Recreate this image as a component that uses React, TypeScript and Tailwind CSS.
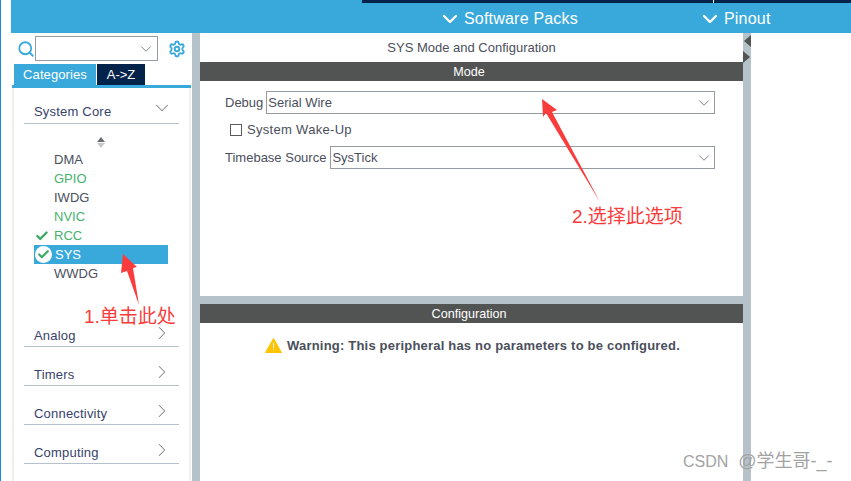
import React from 'react';
import { ChevronDown, ChevronRight, Search, Settings, Check } from 'lucide-react';

const font = "font-['Liberation_Sans',Arial,sans-serif]";

const peripherals = [
  { name: 'DMA', color: 'text-[#4b4f5c]' },
  { name: 'GPIO', color: 'text-[#45b36b]' },
  { name: 'IWDG', color: 'text-[#4b4f5c]' },
  { name: 'NVIC', color: 'text-[#45b36b]' },
];

const Category: React.FC<{ name: string }> = ({ name }) => (
  <div className="h-[39px] pt-[18px] flex-none">
    <div className="h-[21px] mx-[10px] border-b border-[#b5c2c9] flex justify-between pl-[10px] pr-[8px]">
      <span className="text-[13px] leading-[19px] tracking-[0.2px] text-[#37426b]">{name}</span>
      <ChevronRight className="w-[22px] h-[22px] -mr-[2px] -mt-[4px] text-[#7c8288]" strokeWidth={1.1} />
    </div>
  </div>
);

const Sidebar: React.FC = () => (
  <aside className="w-[181px] flex-none flex flex-col bg-white">
    <div className="h-[31px] flex items-center pl-[6px]">
      <Search className="w-[18px] h-[18px] text-[#39a9dc] flex-none" strokeWidth={2.4} />
      <div className="w-[123px] h-[25px] border border-[#979ca0] flex items-center justify-end pr-[2px]">
        <ChevronDown className="w-[18px] h-[18px] text-[#7c8288]" strokeWidth={1.3} />
      </div>
      <Settings className="ml-[10px] w-[18px] h-[18px] text-[#39a9dc]" strokeWidth={2.5} />
    </div>
    <div className="flex pl-[3px] h-[21px] text-[13px] text-white">
      <div className="w-[82px] bg-[#39a9dc] flex items-center justify-center tracking-[0.1px]">Categories</div>
      <div className="w-[48px] ml-[1px] bg-[#03234b] flex items-center justify-center">A-&gt;Z</div>
    </div>
    <div className="h-[3px] ml-[1px] mr-[1px] bg-[#39a9dc]" />
    <div className="flex-1 ml-[1px] mr-[1px] border-x-2 border-[#f0f0f0] flex flex-col">
      <div className="h-[36px] mx-[10px] border-b border-[#b5c2c9] flex items-end justify-between pl-[10px] pb-[1px]">
        <span className="text-[13px] leading-[20px] tracking-[0.2px] text-[#37426b]">System Core</span>
        <ChevronDown className="w-[22px] h-[22px] mb-[3px] mr-[6px] text-[#7c8288]" strokeWidth={1.1} />
      </div>
      <div className="h-[24px] flex items-end justify-center pr-[2px]">
        <div className="flex flex-col gap-[1px] items-center">
          <div className="w-0 h-0 border-x-[4px] border-x-transparent border-b-[5px] border-b-[#6a6e72]" />
          <div className="w-0 h-0 border-x-[4px] border-x-transparent border-t-[5px] border-t-[#c8cbcd]" />
        </div>
      </div>
      <div className="flex flex-col pt-[2px] text-[13px] leading-[19px]">
        {peripherals.map(p => (
          <div key={p.name} className={`h-[19px] pl-[40px] ${p.color}`}>{p.name}</div>
        ))}
        <div className="h-[19px] pl-[21px] flex items-center text-[#45b36b]">
          <Check className="w-[14px] h-[14px] mr-[5px] text-[#3fa866]" strokeWidth={4} />
          RCC
        </div>
        <div className="h-[19px] ml-[20px] w-[134px] bg-[#39a9dc] flex items-center text-white">
          <div className="w-[17px] h-[17px] ml-[1px] mr-[3px] rounded-full bg-white flex items-center justify-center">
            <Check className="w-[13px] h-[13px] text-[#3fa866]" strokeWidth={4} />
          </div>
          SYS
        </div>
        <div className="h-[19px] pl-[40px] text-[#4b4f5c]">WWDG</div>
      </div>
      <div className="h-[25px] flex-none" />
      <Category name="Analog" />
      <Category name="Timers" />
      <Category name="Connectivity" />
      <Category name="Computing" />
    </div>
  </aside>
);

const SelectBox: React.FC<{ value: string; className: string }> = ({ value, className }) => (
  <div className={`h-[23px] border border-[#979ca0] flex items-center justify-between pl-[1px] pr-[1px] text-[13px] text-[#4b4f5c] ${className}`}>
    <span>{value}</span>
    <ChevronDown className="w-[18px] h-[18px] text-[#7c8288]" strokeWidth={1.3} />
  </div>
);

const Arrow: React.FC<{ className: string; w: number; h: number; points: string }> = ({ className, w, h, points }) => (
  <svg className={`absolute ${className}`} width={w} height={h} viewBox={`0 0 ${w} ${h}`}>
    <polygon points={points} fill="#fb3c3c" />
  </svg>
);

const App: React.FC = () => (
  <div className={`relative w-[851px] h-[481px] overflow-hidden bg-white flex ${font}`}>
    <div className="w-[1px] flex-none bg-[#1e88e5]" />
    <div className="w-[10px] flex-none bg-white" />
    <div className="flex-1 flex flex-col min-w-0">
      <header className="h-[33px] flex-none bg-[#39a9dc] flex flex-col">
        <div className="h-[3px] ml-[351px] flex">
          <div className="w-[351px] bg-[#03234b]" />
          <div className="w-[1px] bg-white" />
          <div className="flex-1 bg-[#03234b]" />
        </div>
        <div className="h-[30px] pt-[1px] flex items-center text-white text-[16px] tracking-[0.2px]">
          <ChevronDown className="ml-[427px] w-[24px] h-[24px]" strokeWidth={2.3} />
          <span className="ml-[2px]">Software Packs</span>
          <ChevronDown className="ml-[120px] w-[24px] h-[24px]" strokeWidth={2.3} />
          <span className="ml-[2px]">Pinout</span>
        </div>
      </header>
      <div className="flex-1 flex min-h-0">
        <Sidebar />
        <div className="w-[8px] flex-none bg-[#b5c2c9]" />
        <main className="w-[543px] flex-none flex flex-col text-[#4b4f5c]">
          <div className="h-[29px] flex items-center justify-center text-[13px]">SYS Mode and Configuration</div>
          <div className="h-[19px] pr-[5px] pt-[1px] bg-[#525453] text-white text-[12.6px] flex items-center justify-center">Mode</div>
          <div className="h-[215px] flex-none flex flex-col text-[13px]">
            <div className="flex items-center mt-[10px] ml-[25px]">
              <span className="mr-[3px]">Debug</span>
              <SelectBox value="Serial Wire" className="w-[449px]" />
            </div>
            <div className="flex items-center mt-[5px] ml-[30px] h-[22px]">
              <div className="w-[12px] h-[12px] border border-[#5a5a5a] mr-[5px]" />
              <span className="tracking-[0.3px]">System Wake-Up</span>
            </div>
            <div className="flex items-center mt-[5px] ml-[25px]">
              <span className="mr-[4px]">Timebase Source</span>
              <SelectBox value="SysTick" className="w-[385px]" />
            </div>
          </div>
          <div className="h-[8px] flex-none bg-[#b5c2c9]" />
          <div className="h-[19px] pr-[5px] pt-[1px] bg-[#525453] text-white text-[12.6px] flex items-center justify-center">Configuration</div>
          <div className="flex items-center justify-center mt-[13px] pl-[2px] text-[13px] font-bold tracking-[0.2px]">
            <svg className="mr-[5px]" width="17" height="15" viewBox="0 0 17 15">
              <path d="M8.5 0.5 L16.5 14.5 L0.5 14.5 Z" fill="#ffc400" stroke="#ffc400" strokeLinejoin="round" />
              <rect x="8" y="5" width="1" height="5" fill="#fff" />
              <rect x="8" y="11" width="1" height="1" fill="#fff" />
            </svg>
            Warning: This peripheral has no parameters to be configured.
          </div>
        </main>
        <div className="w-[8px] flex-none bg-[#b5c2c9] flex flex-col items-end pt-[2px]">
          <div className="w-0 h-0 border-y-[6px] border-y-transparent border-r-[7px] border-r-[#525453]" />
          <div className="mt-[4px] self-start w-0 h-0 border-y-[6px] border-y-transparent border-l-[7px] border-l-[#525453]" />
        </div>
      </div>
    </div>
    <Arrow className="left-[120px] top-[254px]" w={24} h={58} points="3,0 17,13 13,14 19,51 7,17 1,19" />
    <Arrow className="left-[541px] top-[97px]" w={60} h={106} points="1,2 16,13 11,15 59,105 5,16 2,20" />
    <span className="absolute left-[84px] top-[305px] text-[19px] leading-[24px] text-[#fb3c3c] font-['Liberation_Sans','Noto_Sans_CJK_SC',sans-serif]">1.单击此处</span>
    <span className="absolute left-[572px] top-[205px] text-[19px] leading-[24px] text-[#fb3c3c] font-['Liberation_Sans','Noto_Sans_CJK_SC',sans-serif]">2.选择此选项</span>
    <span className="absolute left-[683px] top-[450px] text-[16px] leading-[22px] text-[#a3a3a3] font-['Liberation_Sans','Noto_Sans_CJK_SC',sans-serif]">
      CSDN
      <span className="ml-[10px] text-[18px]">@学生哥-_-</span>
    </span>
  </div>
);

export default App;
